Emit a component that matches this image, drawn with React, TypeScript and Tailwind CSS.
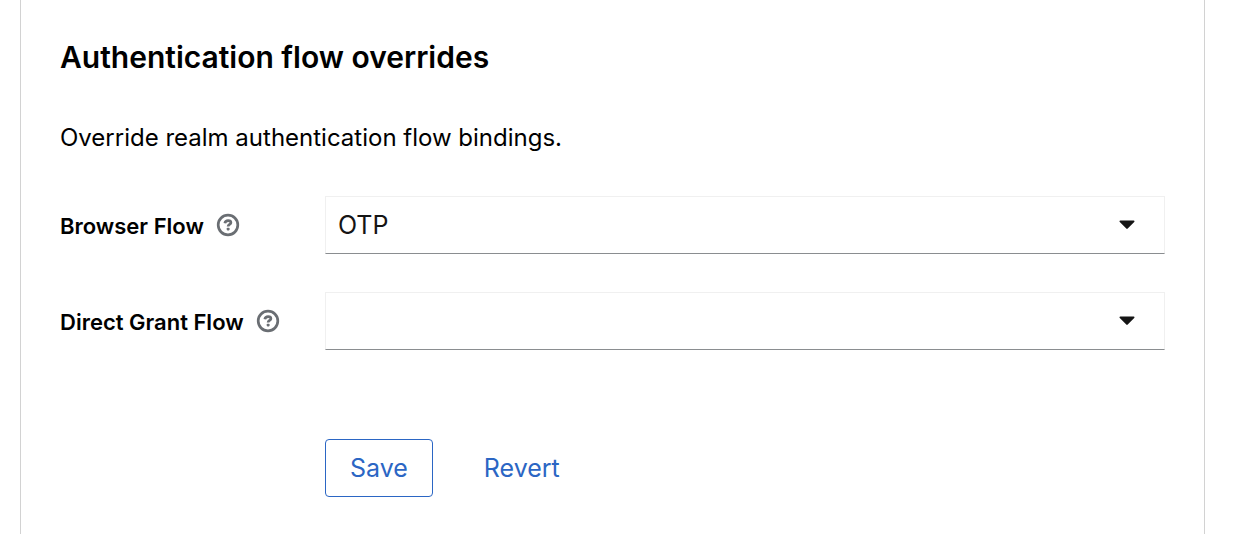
import { useId, useState } from "react";

function HelpIcon() {
  return (
    <svg viewBox="0 0 24 24" className="size-6" fill="none" aria-hidden="true">
      <circle cx="12" cy="12" r="9.8" stroke="#6a6e73" strokeWidth="2.7" />
      <path
        d="M8.8 10.2C9.2 8.5 10.4 7.6 12.1 7.6C13.8 7.6 14.9 8.5 14.9 9.7C14.9 11.5 12.1 11.5 12.1 13.5"
        stroke="#6a6e73"
        strokeWidth="2.7"
      />
      <rect x="10.7" y="14.7" width="2.9" height="2.7" rx="0.8" fill="#6a6e73" />
    </svg>
  );
}

type FlowSelectProps = {
  label: string;
  options: string[];
  value: string;
  onChange: (value: string) => void;
};

function FlowSelect({ label, options, value, onChange }: FlowSelectProps) {
  const id = useId();
  return (
    <div className="grid grid-cols-[265px_1fr] items-center">
      <div className="flex items-center gap-3">
        <label htmlFor={id} className="pt-0.5 text-[22px] leading-8 font-semibold">
          {label}
        </label>
        <button type="button" aria-label={`Help for ${label}`}>
          <HelpIcon />
        </button>
      </div>
      <div className="grid items-center">
        <select
          id={id}
          value={value}
          onChange={(event) => onChange(event.target.value)}
          className="col-start-1 row-start-1 h-[58px] w-full appearance-none border border-[#f0f0f0] border-b-[#8a8d90] bg-white pt-0.5 pr-16 pl-3 text-[25px] text-[#151515]"
        >
          {options.map((option) => (
            <option key={option} value={option}>
              {option}
            </option>
          ))}
        </select>
        <svg
          viewBox="0 0 16 10"
          className="pointer-events-none col-start-1 row-start-1 mr-[30px] h-[10px] w-4 justify-self-end"
          aria-hidden="true"
        >
          <path d="M1.3 0.5H14.7C15.5 0.5 15.8 1.4 15.2 2L8.7 8.6C8.3 9 7.7 9 7.3 8.6L0.8 2C0.2 1.4 0.5 0.5 1.3 0.5Z" fill="#151515" />
        </svg>
      </div>
    </div>
  );
}

export default function App() {
  const [browserFlow, setBrowserFlow] = useState("OTP");
  const [grantFlow, setGrantFlow] = useState("");

  return (
    <main className="min-h-screen bg-white pr-[53px] pl-5 font-['Inter','Liberation_Sans',sans-serif] text-black">
      <section className="min-h-screen border-x border-[#d2d2d2] px-[39px] pt-9">
        <h1 className="text-[30px] leading-[42px] font-semibold">Authentication flow overrides</h1>
        <p className="mt-10 text-[24px] leading-10">Override realm authentication flow bindings.</p>
        <form className="mt-[38px]" onSubmit={(event) => event.preventDefault()}>
          <div className="flex flex-col gap-[38px]">
            <FlowSelect label="Browser Flow" options={["OTP", ""]} value={browserFlow} onChange={setBrowserFlow} />
            <FlowSelect label="Direct Grant Flow" options={["", "OTP"]} value={grantFlow} onChange={setGrantFlow} />
          </div>
          <div className="mt-[89px] flex gap-[27px] pl-[265px] text-[25px] text-[#2b66c4]">
            <button type="submit" className="h-[58px] rounded border border-[#2b66c4] px-6 pt-0.5">
              Save
            </button>
            <button
              type="button"
              className="h-[58px] px-6 pt-0.5"
              onClick={() => {
                setBrowserFlow("OTP");
                setGrantFlow("");
              }}
            >
              Revert
            </button>
          </div>
        </form>
      </section>
    </main>
  );
}
